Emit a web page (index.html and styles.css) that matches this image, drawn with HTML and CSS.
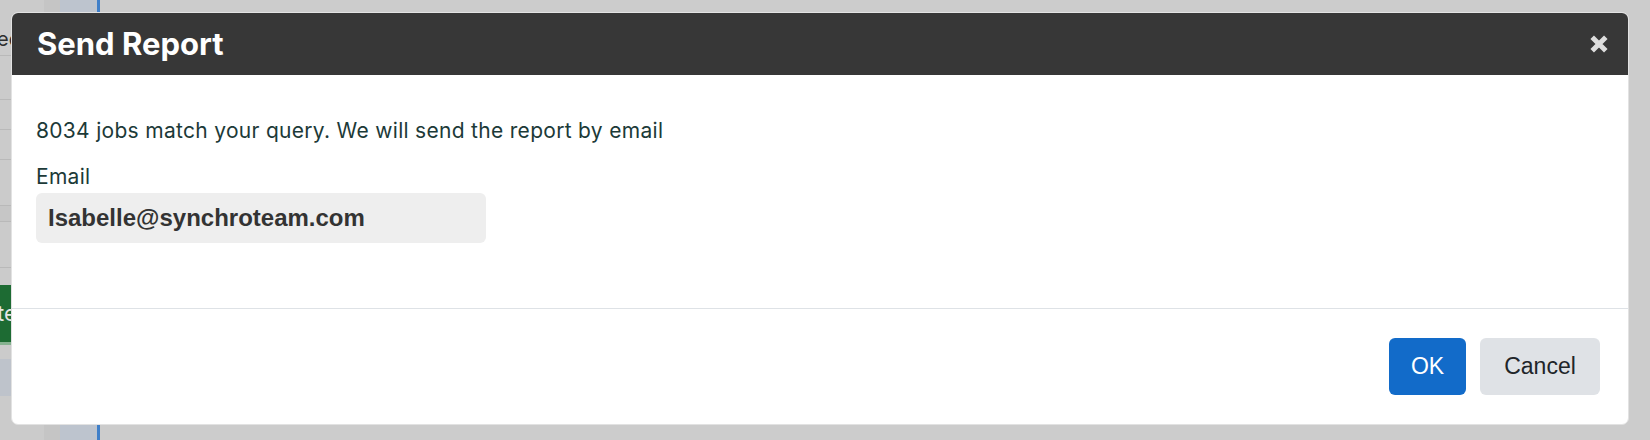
FILE: index.html
```html
<!DOCTYPE html>
<html lang="en">
<head>
<meta charset="utf-8">
<title>Send Report</title>
<link rel="stylesheet" href="styles.css">
</head>
<body>
<div class="app">
  <div class="col-left">
    <div class="lrow lrow-head"><span class="cut-text">ed</span></div>
    <div class="lrow h44"></div>
    <div class="lrow h30"></div>
    <div class="lrow h30"></div>
    <div class="lrow h46"></div>
    <div class="lrow h16 dark"></div>
    <div class="lrow h46"></div>
    <div class="gap17"></div>
    <div class="green-btn"><span>te</span></div>
    <div class="gap14"></div>
    <div class="blue-block"></div>
  </div>
  <div class="col-narrow"></div>
  <div class="col-blue"></div>
  <div class="col-line"></div>
  <div class="col-main"></div>
</div>

<div class="modal">
  <div class="modal-header">
    <h2 class="modal-title">Send Report</h2>
    <button class="close-btn" aria-label="Close">
      <svg width="18" height="18" viewBox="0 0 18 18">
        <path d="M2.2 2.2 L15.8 15.8 M15.8 2.2 L2.2 15.8" stroke="#dddddd" stroke-width="5" fill="none"/>
      </svg>
    </button>
  </div>
  <div class="modal-body">
    <p class="info">8034 jobs match your query. We will send the report by email</p>
    <label class="field-label" for="email">Email</label>
    <input class="field-input" id="email" type="text" value="Isabelle@synchroteam.com">
  </div>
  <div class="modal-footer">
    <button class="btn btn-primary">OK</button>
    <button class="btn btn-secondary">Cancel</button>
  </div>
</div>
</body>
</html>
```

FILE: styles.css
```css
* { box-sizing: border-box; }

html, body {
  margin: 0;
  padding: 0;
}

body {
  width: 1650px;
  height: 440px;
  overflow: hidden;
  background: #cccccc;
  font-family: "Inter", "Liberation Sans", sans-serif;
  position: relative;
}

/* Background page (under the overlay) */
.app {
  display: flex;
  height: 440px;
}

.col-left {
  width: 44px;
  display: flex;
  flex-direction: column;
  background: #cbcbcb;
  overflow: hidden;
}

.lrow {
  border-bottom: 1px solid #b9b9b9;
  flex: none;
}

.lrow-head {
  height: 56px;
  padding-top: 27px;
  font-family: "Inter", sans-serif;
  font-size: 20px;
  line-height: 24px;
  color: #2e2e2e;
  white-space: nowrap;
}

.cut-text { margin-left: -3px; }

.h44 { height: 44px; }
.h30 { height: 30px; }
.h46 { height: 46px; }
.h16 { height: 16px; }
.dark { background: #c6c6c6; }

.gap17 { height: 17px; flex: none; }
.gap14 { height: 14px; flex: none; }

.green-btn {
  flex: none;
  height: 60px;
  background: #1d6b33;
  border-bottom: 3px solid #86b290;
  color: #e6e6e6;
  font-size: 22px;
  line-height: 57px;
  white-space: nowrap;
}

.green-btn span { margin-left: -3px; }

.blue-block {
  flex: none;
  height: 37px;
  background: #bec3cb;
}

.col-narrow {
  width: 16px;
  background: #c5c5c5;
}

.col-blue {
  width: 37px;
  background: #bdc4ce;
}

.col-line {
  width: 3px;
  background: #3f7fc9;
}

.col-main {
  flex: 1;
  background: #cccccc;
}

/* Modal */
.modal {
  position: absolute;
  left: 11px;
  top: 12px;
  width: 1618px;
  height: 413px;
  background: #ffffff;
  border: 1px solid #e2e2e2;
  border-radius: 7px;
  overflow: hidden;
  display: flex;
  flex-direction: column;
}

.modal-header {
  height: 62px;
  background: #373737;
  display: flex;
  align-items: center;
  justify-content: space-between;
  padding: 0 20px 0 24px;
  flex: none;
}

.modal-title {
  margin: 0;
  font-family: "Inter", sans-serif;
  font-weight: 700;
  font-size: 31px;
  line-height: 36px;
  color: #ffffff;
  margin-left: 1px;
}

.close-btn {
  background: none;
  border: 0;
  padding: 0;
  width: 18px;
  height: 18px;
  display: flex;
  cursor: pointer;
}

.modal-body {
  padding: 41px 24px 65px;
  display: flex;
  flex-direction: column;
  align-items: flex-start;
  flex: none;
}

.info {
  margin: 0 0 16px;
  font-size: 21px;
  letter-spacing: 0.3px;
  line-height: 30px;
  color: #1c3a38;
}

.field-label {
  display: block;
  font-size: 21px;
  letter-spacing: 0.3px;
  line-height: 30px;
  color: #1c3a38;
  margin-bottom: 1px;
}

.field-input {
  width: 450px;
  height: 50px;
  border: 0;
  border-radius: 6px;
  background: #eeeeee;
  padding: 0 12px;
  font-family: "Liberation Sans", Arial, sans-serif;
  font-weight: 700;
  font-size: 24px;
  color: #333333;
  outline: none;
}

.modal-footer {
  flex: 1;
  border-top: 1px solid #dee2e6;
  display: flex;
  justify-content: flex-end;
  align-items: flex-start;
  gap: 14px;
  padding: 29px 28px 29px;
}

.btn {
  height: 57px;
  border: 0;
  border-radius: 6px;
  font-family: "Liberation Sans", Arial, sans-serif;
  font-size: 23px;
  padding: 0;
  cursor: pointer;
}

.btn-primary {
  width: 77px;
  background: #126bc9;
  color: #ffffff;
}

.btn-secondary {
  width: 120px;
  background: #dfe2e6;
  color: #212529;
}
```
